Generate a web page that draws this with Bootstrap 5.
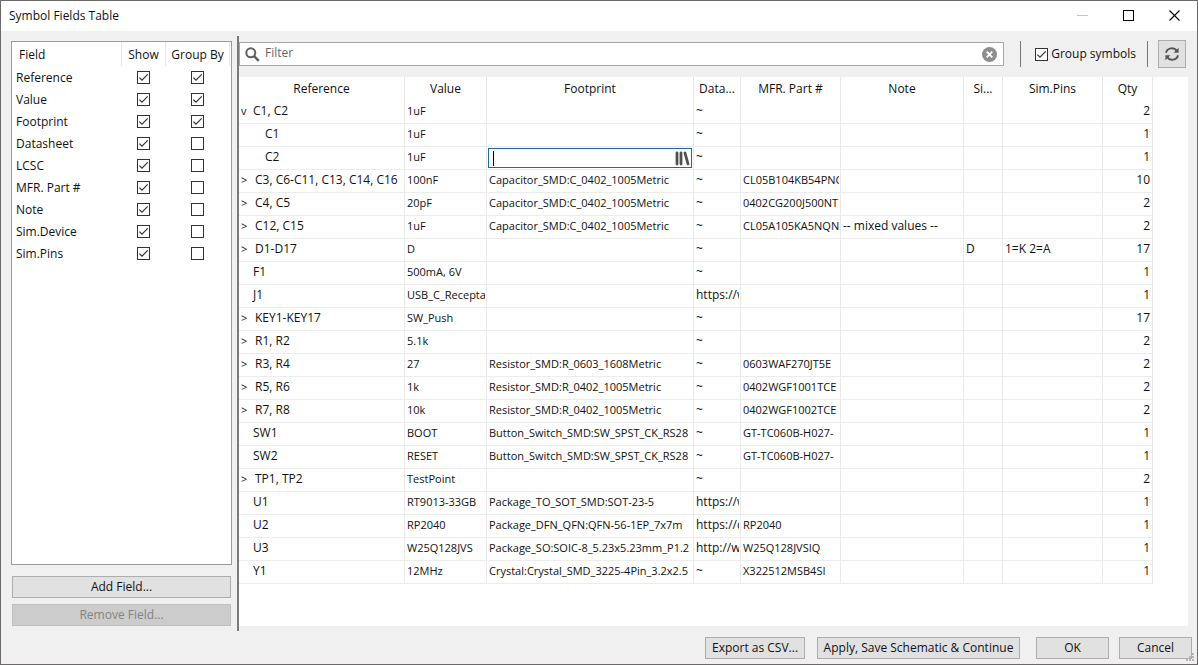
<!DOCTYPE html>
<html lang="en">
<head>
<meta charset="utf-8">
<meta name="viewport" content="width=device-width, initial-scale=1">
<title>Symbol Fields Table</title>
<link href="https://cdn.jsdelivr.net/npm/bootstrap@5.3.0/dist/css/bootstrap.min.css" rel="stylesheet">
<style>
  body { font-family: "Open Sans", "Noto Sans", sans-serif; font-size: 12px; line-height: 20px; color: #111; background: #f0f0f0; }
  .dialog { border: 1px solid #6b696a; }
  .titlebar { height: 30px; padding-left: 8px; }
  .titlebar h1 { font-size: 12px; line-height: 30px; }
  .caption-btn { width: 46px; height: 29px; border: 0; background: none; padding: 0; display: flex; align-items: center; justify-content: center; }
  .sidebar { width: 236px; padding: 10px 5px 5px 10px; }
  .field-box { width: 221px; border: 1px solid #9b9b9b; }
  .grid-table { table-layout: fixed; border-collapse: separate; border-spacing: 0; margin: 0; }
  .grid-table th { font-weight: 400; text-align: center; padding: 2px 0 0; height: 24px; border-right: 1px solid #e6e6e6; }
  .grid-table td { padding: 0 1px 2px 2px; overflow: hidden; white-space: nowrap; }
  .fields { width: 218px; }
  .fields td { height: 22px; padding: 2px 0 0 4px; line-height: 20px; }
  .fields td + td { text-align: center; padding: 0 2px 0 0; }
  .fields th:first-child { text-align: left; padding-left: 7px; }
  .symbols { width: 914px; }
  .symbols th { padding-top: 0; }
  .symbols td { height: 23px; border-right: 1px solid #e9e9e9; border-bottom: 1px solid #ececec; }
  .symbols td > div { overflow: hidden; }
  .symbols td:nth-child(2), .symbols td:nth-child(3), .symbols td:nth-child(5) { font-size: 11px; }
  .symbols td:last-child { text-align: right; padding-right: 2px; }
  .symbols .lone { padding-left: 12px; }
  .symbols .child { padding-left: 24px; }
  .twisty { border: 0; background: none; padding: 0; width: 14px; text-align: left; color: inherit; font-size: 11px; line-height: 20px; }
  .twisty.open { width: 12px; }
  .tick { appearance: none; width: 13px; height: 13px; margin: 0; border: 1px solid #333; background: #fff; vertical-align: middle; flex: none; }
  .tick:checked { background: #fff url("data:image/svg+xml,%3Csvg xmlns='http://www.w3.org/2000/svg' viewBox='0 0 11 11'%3E%3Cpath d='M1.4 5.6 4 8.2 9.7 2.4' fill='none' stroke='%23333' stroke-width='1.2'/%3E%3C/svg%3E") center / 11px no-repeat; }
  .win-btn { font-size: 12px; line-height: 18px; padding: 0; height: 22px; border: 1px solid #adadad; border-radius: 0; background: #e1e1e1; color: #111; }
  .win-btn:disabled { background: #ccc; border-color: #bfbfbf; color: #838383; opacity: 1; }
  .side-btns { width: 219px; margin: 11px 0 0 1px; gap: 6px; }
  .main-pane { border-left: 2px solid #7a7a7a; margin-top: 5px; padding-bottom: 5px; }
  .toolbar { height: 41px; padding: 4px 11px 9px 0; }
  .filter-box { height: 24px; border: 1px solid #a5a5a5; background: #fff; padding: 0 6px 0 5px; }
  .filter-box input { border: 0; outline: 0; background: none; padding: 0 0 2px 5px; line-height: 20px; min-width: 0; }
  .filter-box input::placeholder { color: #666; opacity: 1; }
  .filter-box button, .cell-edit button { border: 0; background: none; padding: 0; display: flex; }
  .vsep { width: 1px; height: 26px; background: #777; }
  .group-toggle { gap: 3px; margin: 0 11px 0 14px; }
  .refresh { width: 28px; height: 28px; padding: 0; margin-left: 10px; border: 1px solid #adadad; background: #e1e1e1; display: flex; align-items: center; justify-content: center; }
  .sheet { background: #fff; margin-right: 9px; }
  .symbols td.editing { padding: 1px; }
  .cell-edit { height: 20px; border: 1px solid #1f6b9c; background: #fff; padding-right: 1px; }
  .cell-edit input { border: 0; outline: 0; padding: 0; min-width: 0; height: 16px; }
  .text-cursor { width: 1px; height: 15px; background: #000; margin-left: 4px; flex: none; }
  .footer { height: 33px; padding: 6px 5px 0 0; }
  .btn-export { width: 100px; margin-right: 12px; }
  .btn-apply { width: 203px; margin-right: 16px; }
  .btn-ok { width: 73px; margin-right: 10px; }
  .btn-cancel { width: 73px; }
  .grip { position: absolute; right: 2px; bottom: 2px; }
</style>
</head>
<body>
<div class="dialog d-flex flex-column min-vh-100 position-relative">
  <header class="titlebar bg-white d-flex">
    <h1 class="m-0 fw-normal flex-grow-1">Symbol Fields Table</h1>
    <button class="caption-btn" aria-label="Minimize"><svg width="11" height="11"><path d="M0 5.500h11" stroke="#c4c4c4"/></svg></button>
    <button class="caption-btn" aria-label="Maximize"><svg width="11" height="11"><rect x=".5" y=".5" width="10" height="10" fill="none" stroke="#000"/></svg></button>
    <button class="caption-btn" aria-label="Close"><svg width="11" height="11"><path d="M.5.5l10 10M10.500.5l-10 10" stroke="#000" stroke-width="1.100"/></svg></button>
  </header>

  <main class="d-flex flex-grow-1">
    <aside class="sidebar d-flex flex-column flex-shrink-0">
      <div class="field-box bg-white flex-grow-1">
        <table class="grid-table fields">
          <colgroup><col style="width:110px"><col style="width:44px"><col style="width:64px"></colgroup>
          <thead><tr><th>Field</th><th>Show</th><th>Group By</th></tr></thead>
          <tbody id="fieldRows"></tbody>
        </table>
      </div>
      <div class="side-btns d-flex flex-column">
        <button class="win-btn">Add Field...</button>
        <button class="win-btn" disabled>Remove Field...</button>
      </div>
    </aside>

    <section class="main-pane d-flex flex-column flex-grow-1 overflow-hidden">
      <div class="toolbar d-flex align-items-center">
        <div class="filter-box d-flex align-items-center flex-grow-1">
          <svg width="15" height="15" viewBox="0 0 15 15"><circle cx="5.800" cy="5.800" r="4.500" fill="none" stroke="#5f5f5f" stroke-width="2"/><path d="M9 9l4.800 4.800" stroke="#5f5f5f" stroke-width="2.400"/></svg>
          <input class="flex-grow-1" type="text" placeholder="Filter" aria-label="Filter">
          <button aria-label="Clear filter"><svg width="15" height="15" viewBox="0 0 15 15"><circle cx="7.500" cy="7.500" r="7.500" fill="#8d8d8d"/><path d="M4.700 4.700l5.600 5.600M10.300 4.700l-5.600 5.600" stroke="#fff" stroke-width="1.800"/></svg></button>
        </div>
        <span class="vsep ms-3"></span>
        <label class="group-toggle d-flex align-items-center text-nowrap"><input type="checkbox" class="tick" checked>Group symbols</label>
        <span class="vsep"></span>
        <button class="refresh" aria-label="Refresh"><svg width="16" height="16" viewBox="0 0 16 16"><g fill="none" stroke="#555" stroke-width="1.900"><path d="M2 6.800C3 1.800 10 .8 12.600 4.600"/><path d="M14 9.200C13 14.200 6 15.200 3.400 11.400"/></g><path d="M14.600 1.800v5H9.600zM1.400 14.200v-5h5z" fill="#555"/></svg></button>
      </div>
      <div class="sheet flex-grow-1">
        <table class="grid-table symbols">
          <colgroup><col style="width:166px"><col style="width:82px"><col style="width:207px"><col style="width:47px"><col style="width:100px"><col style="width:123px"><col style="width:39px"><col style="width:100px"><col style="width:50px"></colgroup>
          <thead><tr><th>Reference</th><th>Value</th><th>Footprint</th><th>Data...</th><th>MFR. Part #</th><th>Note</th><th>Si...</th><th>Sim.Pins</th><th>Qty</th></tr></thead>
          <tbody id="symbolRows"></tbody>
        </table>
      </div>
    </section>
  </main>

  <footer class="footer d-flex justify-content-end align-items-start">
    <button class="win-btn btn-export">Export as CSV...</button>
    <button class="win-btn btn-apply">Apply, Save Schematic &amp; Continue</button>
    <button class="win-btn btn-ok">OK</button>
    <button class="win-btn btn-cancel">Cancel</button>
  </footer>
  <svg class="grip" width="9" height="9" fill="#b5b5b5"><path d="M0 6h2v2H0zM3 6h2v2H3zM6 6h2v2H6zM6 3h2v2H6zM6 0h2v2H6zM3 3h2v2H3z"/></svg>
</div>

<script>
  const fields = [["Reference", 1], ["Value", 1], ["Footprint", 1], ["Datasheet", 0], ["LCSC", 0], ["MFR. Part #", 0], ["Note", 0], ["Sim.Device", 0], ["Sim.Pins", 0]];
  document.getElementById("fieldRows").innerHTML = fields.map(([name, grouped]) =>
    `<tr><td>${name}</td><td><input type="checkbox" class="tick" checked aria-label="Show ${name}"></td><td><input type="checkbox" class="tick" ${grouped ? "checked" : ""} aria-label="Group by ${name}"></td></tr>`).join("");

  // kind: open group, closed group, lone symbol, child of a group
  const cap = "Capacitor_SMD:C_0402_1005Metric", res = "Resistor_SMD:R_0402_1005Metric", sw = "Button_Switch_SMD:SW_SPST_CK_RS28";
  const rows = [
    ["open", "C1, C2", "1uF", "", "~", "", "", "", "", 2],
    ["child", "C1", "1uF", "", "~", "", "", "", "", 1],
    ["child", "C2", "1uF", null, "~", "", "", "", "", 1],
    ["closed", "C3, C6-C11, C13, C14, C16", "100nF", cap, "~", "CL05B104KB54PNC", "", "", "", 10],
    ["closed", "C4, C5", "20pF", cap, "~", "0402CG200J500NT", "", "", "", 2],
    ["closed", "C12, C15", "1uF", cap, "~", "CL05A105KA5NQN", "-- mixed values --", "", "", 2],
    ["closed", "D1-D17", "D", "", "~", "", "", "D", "1=K 2=A", 17],
    ["lone", "F1", "500mA, 6V", "", "~", "", "", "", "", 1],
    ["lone", "J1", "USB_C_Recepta", "", "https://w", "", "", "", "", 1],
    ["closed", "KEY1-KEY17", "SW_Push", "", "~", "", "", "", "", 17],
    ["closed", "R1, R2", "5.1k", "", "~", "", "", "", "", 2],
    ["closed", "R3, R4", "27", "Resistor_SMD:R_0603_1608Metric", "~", "0603WAF270JT5E", "", "", "", 2],
    ["closed", "R5, R6", "1k", res, "~", "0402WGF1001TCE", "", "", "", 2],
    ["closed", "R7, R8", "10k", res, "~", "0402WGF1002TCE", "", "", "", 2],
    ["lone", "SW1", "BOOT", sw, "~", "GT-TC060B-H027-", "", "", "", 1],
    ["lone", "SW2", "RESET", sw, "~", "GT-TC060B-H027-", "", "", "", 1],
    ["closed", "TP1, TP2", "TestPoint", "", "~", "", "", "", "", 2],
    ["lone", "U1", "RT9013-33GB", "Package_TO_SOT_SMD:SOT-23-5", "https://w", "", "", "", "", 1],
    ["lone", "U2", "RP2040", "Package_DFN_QFN:QFN-56-1EP_7x7m", "https://d", "RP2040", "", "", "", 1],
    ["lone", "U3", "W25Q128JVS", "Package_SO:SOIC-8_5.23x5.23mm_P1.2", "http://w", "W25Q128JVSIQ", "", "", "", 1],
    ["lone", "Y1", "12MHz", "Crystal:Crystal_SMD_3225-4Pin_3.2x2.5", "~", "X322512MSB4SI", "", "", "", 1]
  ];
  const editor = `<td class="editing"><div class="cell-edit d-flex align-items-center"><span class="text-cursor"></span><input class="flex-grow-1" type="text" aria-label="Footprint"><button aria-label="Browse footprint libraries"><svg width="15" height="15" viewBox="0 0 15 15" fill="none" stroke="#505050" stroke-width="2.800" stroke-linecap="round"><path d="M2 2v11M6 2v11"/><path d="M10 2l3 11"/></svg></button></div></td>`;
  document.getElementById("symbolRows").innerHTML = rows.map(([kind, ref, ...cells]) => {
    const group = kind === "open" || kind === "closed";
    const twisty = group ? `<button class="twisty ${kind}" aria-label="Toggle ${ref}">${kind === "open" ? "v" : "&gt;"}</button>` : "";
    return `<tr><td><div class="${group ? "" : kind}">${twisty}${ref}</div></td>` +
      cells.map(c => c === null ? editor : `<td><div>${c}</div></td>`).join("") + "</tr>";
  }).join("");
</script>
<script src="https://cdn.jsdelivr.net/npm/bootstrap@5.3.0/dist/js/bootstrap.bundle.min.js"></script>
</body>
</html>
